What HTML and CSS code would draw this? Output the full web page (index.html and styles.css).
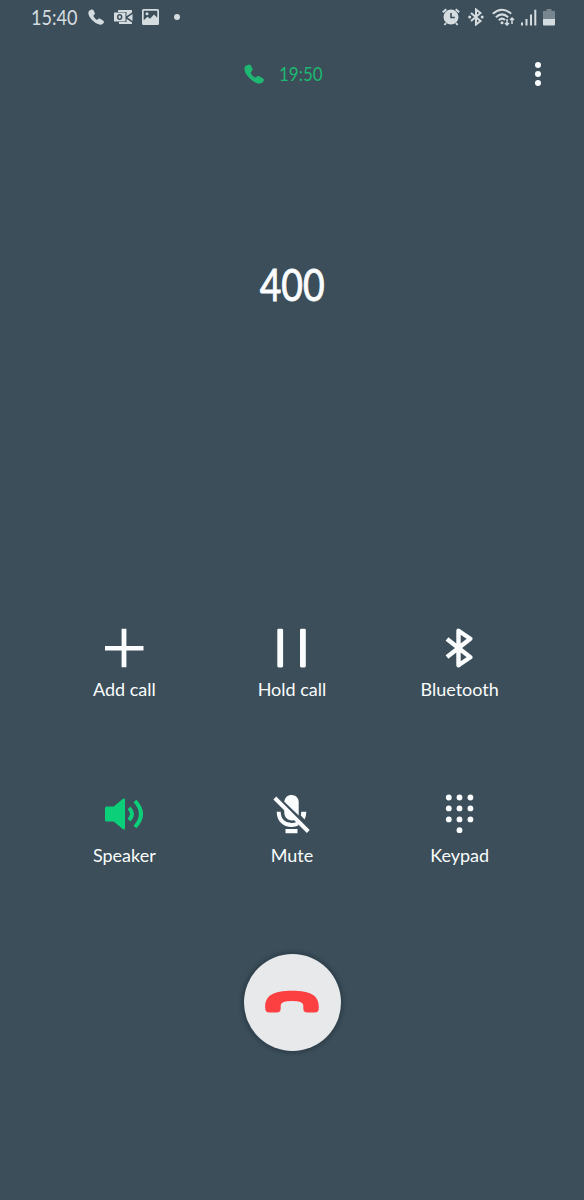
FILE: index.html
```
<!DOCTYPE html>
<html lang="en">
<head>
  <meta charset="UTF-8">
  <meta name="viewport" content="width=device-width, initial-scale=1.0">
  <title>Call</title>
  <link rel="stylesheet" href="styles.css">
</head>
<body>
  <div class="screen">
    <div class="status-bar">
      <div class="status-left">
        <span class="clock">15:40</span>
        <svg class="icon-phone" width="16" height="16" viewBox="0 0 20 20"><path d="M4.500.7 1.800 1.800C-.2 3.200-.1 7 2.800 11c3.500 4.800 9 8.600 12.900 8.600 1.800.1 3.400-1.300 4.100-2.800.3-.9 0-1.700-.7-2.200l-3.800-2.400c-.9-.5-1.900-.3-2.500.3l-.8.7c-.6.5-1.200.4-1.900-.1C8.900 12 7.800 10.800 7 9.400c-.4-.7-.3-1.300.2-1.700l.8-.8c.7-.6.8-1.500.4-2.300L6.900 1.500C6.400.5 5.400.3 4.500.7z"/></svg>
        <svg class="icon-mail" width="19" height="16" viewBox="0 0 19 16">
          <path d="M4 1h14v2.500l-5.500 3.800V3H4zM18.500 5v7L13.500 8.500zM12.500 9.800l5.500 3.700V15H5v-2h7.500z"/>
          <path fill-rule="evenodd" d="M0 3.500h11.500v9H0zM5.700 5C3.900 5 3 6.300 3 8s.9 3 2.700 3 2.700-1.300 2.700-3-.9-3-2.700-3zm0 1.500c.8 0 1.200.6 1.200 1.500s-.4 1.500-1.200 1.500S4.500 8.900 4.500 8s.4-1.500 1.200-1.500z"/>
        </svg>
        <svg class="icon-image" width="17" height="16" viewBox="0 0 17 16"><path fill-rule="evenodd" d="M1.500 0h14Q17 0 17 1.500v13q0 1.500-1.500 1.500h-14Q0 16 0 14.500v-13Q0 0 1.500 0zm.2 1.700v9.600l3.800-3.500 2.500 2 4-4.300 3.300 3.300V1.700zM5 3.200a1.500 1.500 0 1 1 0 3 1.500 1.500 0 0 1 0-3z"/></svg>
        <span class="more-dot"></span>
      </div>
      <div class="status-right">
        <svg class="icon-alarm" width="18" height="18" viewBox="0 0 18 18">
          <path fill-rule="evenodd" d="M9 1.500a7.500 7.500 0 1 1 0 15 7.500 7.500 0 0 1 0-15zM8.200 5v5.200h4.700V8.700H9.800V5z"/>
          <path class="line" d="M.8 4.200l3.500-3M17.200 4.200l-3.500-3M4 15l-1.600 2M14 15l1.600 2"/>
        </svg>
        <svg class="icon-bt" width="16" height="18" viewBox="0 0 16 18">
          <path class="line" d="M3 5l9.500 8L8 16.500v-15L12.500 5 3 13"/>
          <circle cx="1.700" cy="9" r="1.500"/><circle cx="14.200" cy="9" r="1.500"/>
        </svg>
        <svg class="icon-wifi" width="23" height="18" viewBox="0 0 23 18">
          <path class="line" d="M.8 5.700Q10 -2.300 19.200 5.700M3.800 9.200Q10 3.600 16.200 9.200M6.800 12.300Q10 9.200 13 12"/>
          <circle cx="10" cy="14.800" r="1.500"/>
          <path class="thin" d="M15 11v6M13 15l2 2 2-2M20 16v-6M18 12l2-2 2 2"/>
        </svg>
        <svg class="icon-signal" width="16" height="17" viewBox="0 0 16 17"><path d="M0 13.500h2V16.500H0zM4.500 10h2v6.500h-2zM9 5.500h2v11H9zM13.300.8h2v15.700h-2z"/></svg>
        <svg class="icon-battery" width="12" height="17" viewBox="0 0 12 17"><path class="dim" d="M3.500 0h5v2H12v8H0V2h3.500z"/><path d="M0 10h12v5.500q0 1-1 1H1q-1 0-1-1z"/></svg>
      </div>
    </div>

    <div class="call-header">
      <svg width="20" height="20" viewBox="0 0 20 20"><path d="M4.500.7 1.800 1.800C-.2 3.200-.1 7 2.800 11c3.500 4.800 9 8.600 12.900 8.600 1.800.1 3.400-1.300 4.100-2.800.3-.9 0-1.700-.7-2.200l-3.800-2.400c-.9-.5-1.900-.3-2.500.3l-.8.7c-.6.5-1.200.4-1.900-.1C8.900 12 7.800 10.800 7 9.400c-.4-.7-.3-1.300.2-1.700l.8-.8c.7-.6.8-1.500.4-2.300L6.900 1.500C6.400.5 5.400.3 4.500.7z"/></svg>
      <span class="duration">19:50</span>
      <button class="menu" aria-label="More options"><i></i><i></i><i></i></button>
    </div>

    <h1 class="number"><span>400</span></h1>

    <div class="actions">
      <button class="action">
        <svg width="40" height="40" viewBox="0 0 40 40"><path d="M17.600.8h4.800v17.100h17.100v4.600H22.400v16.800h-4.800V22.500H1v-4.600h16.600z"/></svg>
        <span>Add call</span>
      </button>
      <button class="action">
        <svg width="40" height="40" viewBox="0 0 40 40"><rect x="5.300" y=".8" width="5.800" height="38.600" rx="1.300"/><rect x="28" y=".8" width="5.800" height="38.600" rx="1.300"/></svg>
        <span>Hold call</span>
      </button>
      <button class="action">
        <svg width="40" height="40" viewBox="0 0 40 40"><path class="stroke" d="M7 11l23.300 18.300-11.800 8V2.700l11.800 8L7 29"/></svg>
        <span>Bluetooth</span>
      </button>
      <button class="action active">
        <svg width="40" height="40" viewBox="0 0 40 40"><path d="M2.500 12.500h7.200L19 4.800q2-1.200 2 1v28.400q0 2.200-2 1L9.700 27.500H2.500q-1.500 0-1.500-1.500V14q0-1.500 1.500-1.500z"/><path class="wave" d="M25 13.800Q31 20 25 26.200M31 7Q43 20 31 33"/></svg>
        <span>Speaker</span>
      </button>
      <button class="action">
        <svg width="40" height="40" viewBox="0 0 40 40"><path d="M12.300 7.800C12.800 3.400 15.500 1 19.500 1s7.200 2.800 7.200 7v13.500zM12.300 14.700 23.300 25.700C18 28 12.300 24.500 12.300 18.800zM29.300 17.700h5q0 4.500-1.700 7.700l-3.800-3.800zM13.500 35h12v4.300h-12z"/><path class="mic" d="M6.700 17.700C6.700 26.500 12.500 31 19.500 31q3.500 0 6.300-1.500"/><path class="slash" d="M2.800 4 36.300 37.500"/></svg>
        <span>Mute</span>
      </button>
      <button class="action">
        <svg width="40" height="40" viewBox="0 0 40 40">
          <circle cx="8.800" cy="3.500" r="2.900"/><circle cx="19.500" cy="3.500" r="2.900"/><circle cx="30.400" cy="3.500" r="2.900"/>
          <circle cx="8.800" cy="14.400" r="2.900"/><circle cx="19.500" cy="14.400" r="2.900"/><circle cx="30.400" cy="14.400" r="2.900"/>
          <circle cx="8.800" cy="25.400" r="2.900"/><circle cx="19.500" cy="25.400" r="2.900"/><circle cx="30.400" cy="25.400" r="2.900"/>
          <circle cx="19.500" cy="36.200" r="2.900"/>
        </svg>
        <span>Keypad</span>
      </button>
    </div>

    <button class="end-call" aria-label="End call">
      <svg width="56" height="24" viewBox="0 0 56 24"><path d="M1.200 18C.8 5.500 9 .8 28 .8S55.200 5.500 54.800 18q0 4.500-4 4.500h-7.500q-4 0-4-4v-3.200Q39.300 11 28 11t-11.300 4.300v3.200q0 4-4 4H5.200q-4 0-4-4.500z"/></svg>
    </button>
  </div>
</body>
</html>
```
FILE: styles.css
```
body {
  margin: 0;
  background-color: #3b4e59;
  color: #fafcfd;
  font-family: Lato, sans-serif;
}
.screen {
  width: 584px;
  height: 1200px;
  display: flex;
  flex-direction: column;
  align-items: center;
  overflow: hidden;
}
svg {
  display: block;
  flex-shrink: 0;
  fill: currentColor;
}
button {
  padding: 0;
  border: none;
  background: none;
  color: inherit;
  font-family: inherit;
  cursor: pointer;
}

/* status bar */
.status-bar {
  box-sizing: border-box;
  width: 100%;
  height: 34px;
  padding: 0 29px 0 31px;
  display: flex;
  justify-content: space-between;
  align-items: center;
  color: #d5dce0;
}
.status-left,
.status-right {
  display: flex;
  align-items: center;
}
.clock {
  width: 47px;
  margin-right: 10px;
  font-size: 21px;
  line-height: 34px;
  transform: scaleX(0.86);
  transform-origin: left;
}
.icon-mail {
  margin-left: 10px;
}
.icon-image {
  margin-left: 9px;
}
.more-dot {
  width: 6px;
  height: 6px;
  margin-left: 15px;
  border-radius: 50%;
  background-color: currentColor;
}
.line,
.thin {
  fill: none;
  stroke: currentColor;
  stroke-width: 2;
}
.thin {
  stroke-width: 1.5;
}
.icon-bt {
  margin-left: 8px;
}
.icon-wifi {
  margin-left: 8px;
}
.icon-signal {
  margin-left: 6px;
}
.icon-battery {
  margin-left: 6px;
}
.dim {
  opacity: 0.4;
}

/* call timer */
.call-header {
  box-sizing: border-box;
  width: 100%;
  height: 80px;
  padding: 0 43px 0 244px;
  display: flex;
  align-items: center;
  color: #1fb873;
}
.duration {
  margin-left: 15px;
  padding-bottom: 2px;
  font-size: 20px;
  transform: scaleX(0.85);
  transform-origin: left;
}
.menu {
  margin-left: auto;
  display: flex;
  flex-direction: column;
  gap: 3px;
  color: #fafcfd;
}
.menu i {
  width: 6px;
  height: 6px;
  border-radius: 50%;
  background-color: currentColor;
}

.number {
  height: 60px;
  margin: 140px 0 0;
  font-size: 45px;
  font-weight: 400;
  line-height: 60px;
}
.number span {
  display: block;
  -webkit-text-stroke: 0.9px currentColor;
  transform: scaleX(0.83);
}

/* call buttons */
.actions {
  width: 503px;
  margin-top: 314px;
  display: grid;
  grid-template-columns: repeat(3, 1fr);
  grid-auto-rows: 166px;
}
.action {
  display: flex;
  flex-direction: column;
  align-items: center;
  justify-content: flex-start;
  font-size: 18px;
}
.action span {
  margin-top: 9px;
  line-height: 24px;
}
.active svg {
  color: #0ccf79;
}
.stroke {
  fill: none;
  stroke: currentColor;
  stroke-width: 4.4;
  stroke-linejoin: round;
}
.wave,
.mic,
.slash {
  fill: none;
  stroke: currentColor;
  stroke-width: 4;
}

.end-call {
  width: 97px;
  height: 97px;
  margin-top: -6px;
  display: flex;
  align-items: center;
  justify-content: center;
  border-radius: 50%;
  background-color: #e7e9eb;
  box-shadow: 0 0 3px 3px rgba(35, 50, 62, 0.4);
  color: #fc4041;
}
.end-call svg {
  margin: 0 1px 2px 0;
}
```
